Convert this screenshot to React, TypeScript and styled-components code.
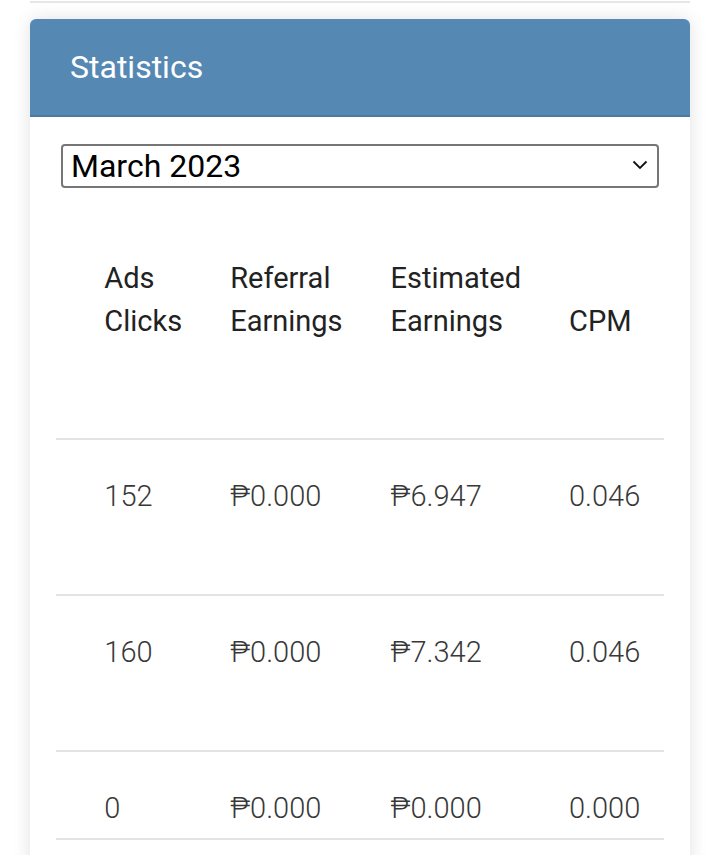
import React, { useLayoutEffect, useRef } from "react";
import styled, { createGlobalStyle } from "styled-components";

// --- Global ---

const GlobalStyle = createGlobalStyle`
  * {
    box-sizing: border-box;
  }
  body {
    margin: 0;
    background: #ffffff;
    font-family: Roboto, "Liberation Sans", sans-serif;
    color: #222;
  }
`;

// --- Layout ---

const Page = styled.div`
  padding: 0 30px;
`;

const Divider = styled.hr`
  margin: 1px 0 0;
  border: none;
  border-top: 2px solid #e6e6e6;
`;

const Card = styled.section`
  margin-top: 16px;
  background: #fff;
  border-radius: 6px;
  box-shadow: 0 0 18px rgba(0, 0, 0, 0.12);
`;

const CardHeader = styled.header`
  height: 98px;
  display: flex;
  align-items: center;
  padding: 0 40px;
  background: #5589b4;
  border-bottom: 2px solid #4a7aa2;
  border-radius: 6px 6px 0 0;
  color: #fff;
  font-size: 32px;
  font-weight: 400;
`;

const CardBody = styled.div`
  padding: 27px 26px 40px;
`;

// --- Month picker ---

const SelectWrap = styled.div`
  position: relative;
  margin: 0 5px;
`;

const MonthSelect = styled.select`
  appearance: none;
  width: 100%;
  height: 44px;
  padding: 0 40px 0 8px;
  border: 2px solid #767676;
  border-radius: 4px;
  background: #fff;
  color: #000;
  font-family: Roboto, "Liberation Sans", sans-serif;
  font-size: 32px;
  line-height: 40px;
`;

const Chevron = styled.svg`
  position: absolute;
  right: 11px;
  top: 16px;
  pointer-events: none;
`;

// --- Table ---

const TableScroll = styled.div`
  margin-top: 33px;
  overflow-x: auto;
  scrollbar-width: none;
  &::-webkit-scrollbar {
    display: none;
  }
`;

const Table = styled.table`
  border-collapse: collapse;
  font-size: 29px;
  line-height: 43px;
  color: #222;

  th:nth-child(2),
  td:nth-child(2) {
    padding-right: 22px;
  }
  th:nth-child(3),
  td:nth-child(3) {
    padding-left: 26px;
  }
`;

const HeadCell = styled.th`
  padding: 36px 24px 95px;
  vertical-align: bottom;
  text-align: left;
  font-weight: 400;
  border-bottom: 2px solid #e3e3e3;
`;

const Row = styled.tr<{ $height: number }>`
  td {
    height: ${(p) => p.$height}px;
  }
`;

const Cell = styled.td`
  padding: 35px 24px 0;
  vertical-align: top;
  white-space: nowrap;
  font-weight: 300;
  color: #383838;
  border-bottom: 2px solid #e3e3e3;
`;

// --- Data ---

const columns = ["Date", "Ads Views", "Ads Clicks", "Referral Earnings", "Estimated Earnings", "CPM"];

const rows = [
  { date: "01", views: "148", clicks: "152", referral: "₱0.000", estimated: "₱6.947", cpm: "0.046", h: 156 },
  { date: "02", views: "157", clicks: "160", referral: "₱0.000", estimated: "₱7.342", cpm: "0.046", h: 156 },
  { date: "03", views: "0", clicks: "0", referral: "₱0.000", estimated: "₱0.000", cpm: "0.000", h: 88 },
  { date: "04", views: "0", clicks: "0", referral: "₱0.000", estimated: "₱0.000", cpm: "0.000", h: 88 },
];

// --- App ---

export default function App() {
  const scrollRef = useRef<HTMLDivElement>(null);

  // the table is shown scrolled all the way to the right
  useLayoutEffect(() => {
    const el = scrollRef.current;
    if (el) el.scrollLeft = el.scrollWidth;
  }, []);

  return (
    <>
      <GlobalStyle />
      <Page>
        <Divider />
        <Card>
          <CardHeader>Statistics</CardHeader>
          <CardBody>
            <SelectWrap>
              <MonthSelect defaultValue="2023-03">
                <option value="2023-03">March 2023</option>
                <option value="2023-02">February 2023</option>
                <option value="2023-01">January 2023</option>
              </MonthSelect>
              <Chevron width="16" height="10" viewBox="0 0 16 10">
                <path d="M1.5 1.5 L8 8 L14.5 1.5" fill="none" stroke="#111" strokeWidth="1.8" />
              </Chevron>
            </SelectWrap>

            <TableScroll ref={scrollRef}>
              <Table>
                <thead>
                  <tr>
                    {columns.map((c) => (
                      <HeadCell key={c}>{c}</HeadCell>
                    ))}
                  </tr>
                </thead>
                <tbody>
                  {rows.map((r) => (
                    <Row key={r.date} $height={r.h}>
                      <Cell>{r.date}</Cell>
                      <Cell>{r.views}</Cell>
                      <Cell>{r.clicks}</Cell>
                      <Cell>{r.referral}</Cell>
                      <Cell>{r.estimated}</Cell>
                      <Cell>{r.cpm}</Cell>
                    </Row>
                  ))}
                </tbody>
              </Table>
            </TableScroll>
          </CardBody>
        </Card>
      </Page>
    </>
  );
}
